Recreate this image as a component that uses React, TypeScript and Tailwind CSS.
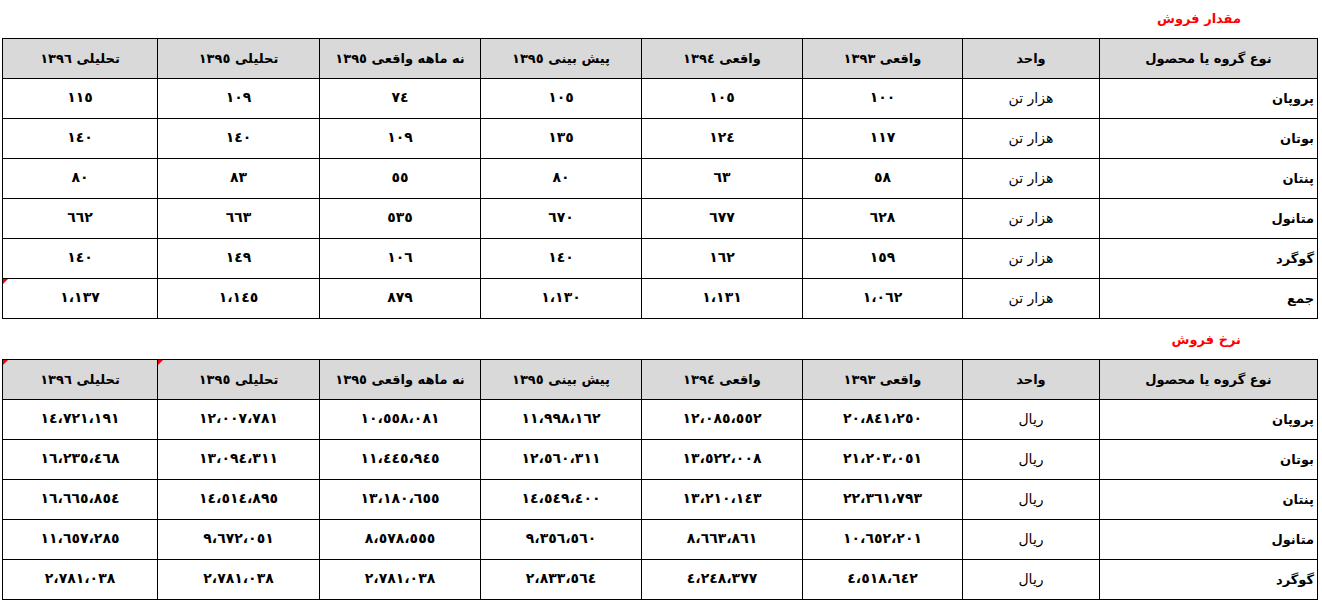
import React from "react";

const headers = [
  "نوع گروه یا محصول",
  "واحد",
  "واقعی ۱۳۹۳",
  "واقعی ۱۳۹۴",
  "پیش بینی ۱۳۹۵",
  "نه ماهه واقعی ۱۳۹۵",
  "تحلیلی ۱۳۹۵",
  "تحلیلی ۱۳۹۶",
];

const widths = ["w-[218px]", "w-[137px]", "w-[160px]", "w-[161px]", "w-[161px]", "w-[161px]", "w-[162px]", "w-[155px]"];

const volumeRows = [
  { name: "پروپان", unit: "هزار تن", values: ["100", "105", "105", "74", "109", "115"] },
  { name: "بوتان", unit: "هزار تن", values: ["117", "124", "135", "109", "140", "140"] },
  { name: "پنتان", unit: "هزار تن", values: ["58", "63", "80", "55", "83", "80"] },
  { name: "متانول", unit: "هزار تن", values: ["628", "677", "670", "535", "663", "662"] },
  { name: "گوگرد", unit: "هزار تن", values: ["159", "162", "140", "106", "149", "140"] },
  { name: "جمع", unit: "هزار تن", values: ["1,062", "1,131", "1,130", "879", "1,145", "1,137"], flagLast: true },
];

const priceRows = [
  { name: "پروپان", unit: "ریال", values: ["20,841,250", "12,085,552", "11,998,162", "10,558,081", "12,007,781", "14,721,191"] },
  { name: "بوتان", unit: "ریال", values: ["21,203,051", "13,522,008", "12,560,311", "11,445,945", "13,094,311", "16,235,468"] },
  { name: "پنتان", unit: "ریال", values: ["22,361,793", "13,210,143", "14,549,400", "13,180,655", "14,514,895", "16,665,854"] },
  { name: "متانول", unit: "ریال", values: ["10,652,201", "8,663,861", "9,356,560", "8,578,555", "9,672,051", "11,657,285"] },
  { name: "گوگرد", unit: "ریال", values: ["4,518,642", "4,248,377", "2,833,564", "2,781,038", "2,781,038", "2,781,038"] },
];

// excel style numbers: arabic-indic digits with arabic comma
function toArabic(value: string) {
  return value
    .replace(/[0-9]/g, (d) => String.fromCharCode(0x0660 + Number(d)))
    .replace(/,/g, "\u060C");
}

function headerText(label: string) {
  return label.replace(/[۰-۹]/g, (d) => String.fromCharCode(0x0660 + (d.charCodeAt(0) - 0x06f0)));
}

function Flag() {
  return (
    <span className="absolute left-0 top-0 h-0 w-0 border-l-[5px] border-b-[5px] border-l-[#ff0000] border-b-transparent" />
  );
}

type Row = { name: string; unit: string; values: string[]; flagLast?: boolean };

function SalesTable({ rows, flagHeader }: { rows: Row[]; flagHeader?: boolean }) {
  return (
    <table dir="rtl" className="w-[1316px] table-fixed border-collapse border border-black text-[13px] text-black">
      <colgroup>
        {widths.map((w, i) => (
          <col key={i} className={w} />
        ))}
      </colgroup>
      <thead>
        <tr className="h-10 bg-[#d9d9d9]">
          {headers.map((h, i) => (
            <th key={h} className="relative border border-black p-0 text-center font-bold">
              {flagHeader && i >= 6 && <Flag />}
              {headerText(h)}
            </th>
          ))}
        </tr>
      </thead>
      <tbody>
        {rows.map((row) => (
          <tr key={row.name} className="h-10">
            <td className="border border-black px-[3px] text-right font-bold">{row.name}</td>
            <td className="border border-black text-center text-[14px] font-normal">{row.unit}</td>
            {row.values.map((v, i) => (
              <td key={i} className="relative border border-black pb-[2px] text-center text-[14px] font-bold">
                {row.flagLast && i === 5 && <Flag />}
                {toArabic(v)}
              </td>
            ))}
          </tr>
        ))}
      </tbody>
    </table>
  );
}

export default function App() {
  return (
    <div className="h-[606px] w-[1322px] overflow-hidden bg-white pl-[2px] font-['DejaVu_Sans','Noto_Naskh_Arabic',sans-serif]">
      <div dir="rtl" className="flex h-[38px] w-[1316px] items-center pr-[77px] text-[13px] font-bold text-[#ff0000]">
        مقدار فروش
      </div>
      <SalesTable rows={volumeRows} />
      <div dir="rtl" className="flex h-[40px] w-[1316px] items-center pr-[77px] pt-[2px] text-[13px] font-bold text-[#ff0000]">
        نرخ فروش
      </div>
      <SalesTable rows={priceRows} flagHeader />
    </div>
  );
}
